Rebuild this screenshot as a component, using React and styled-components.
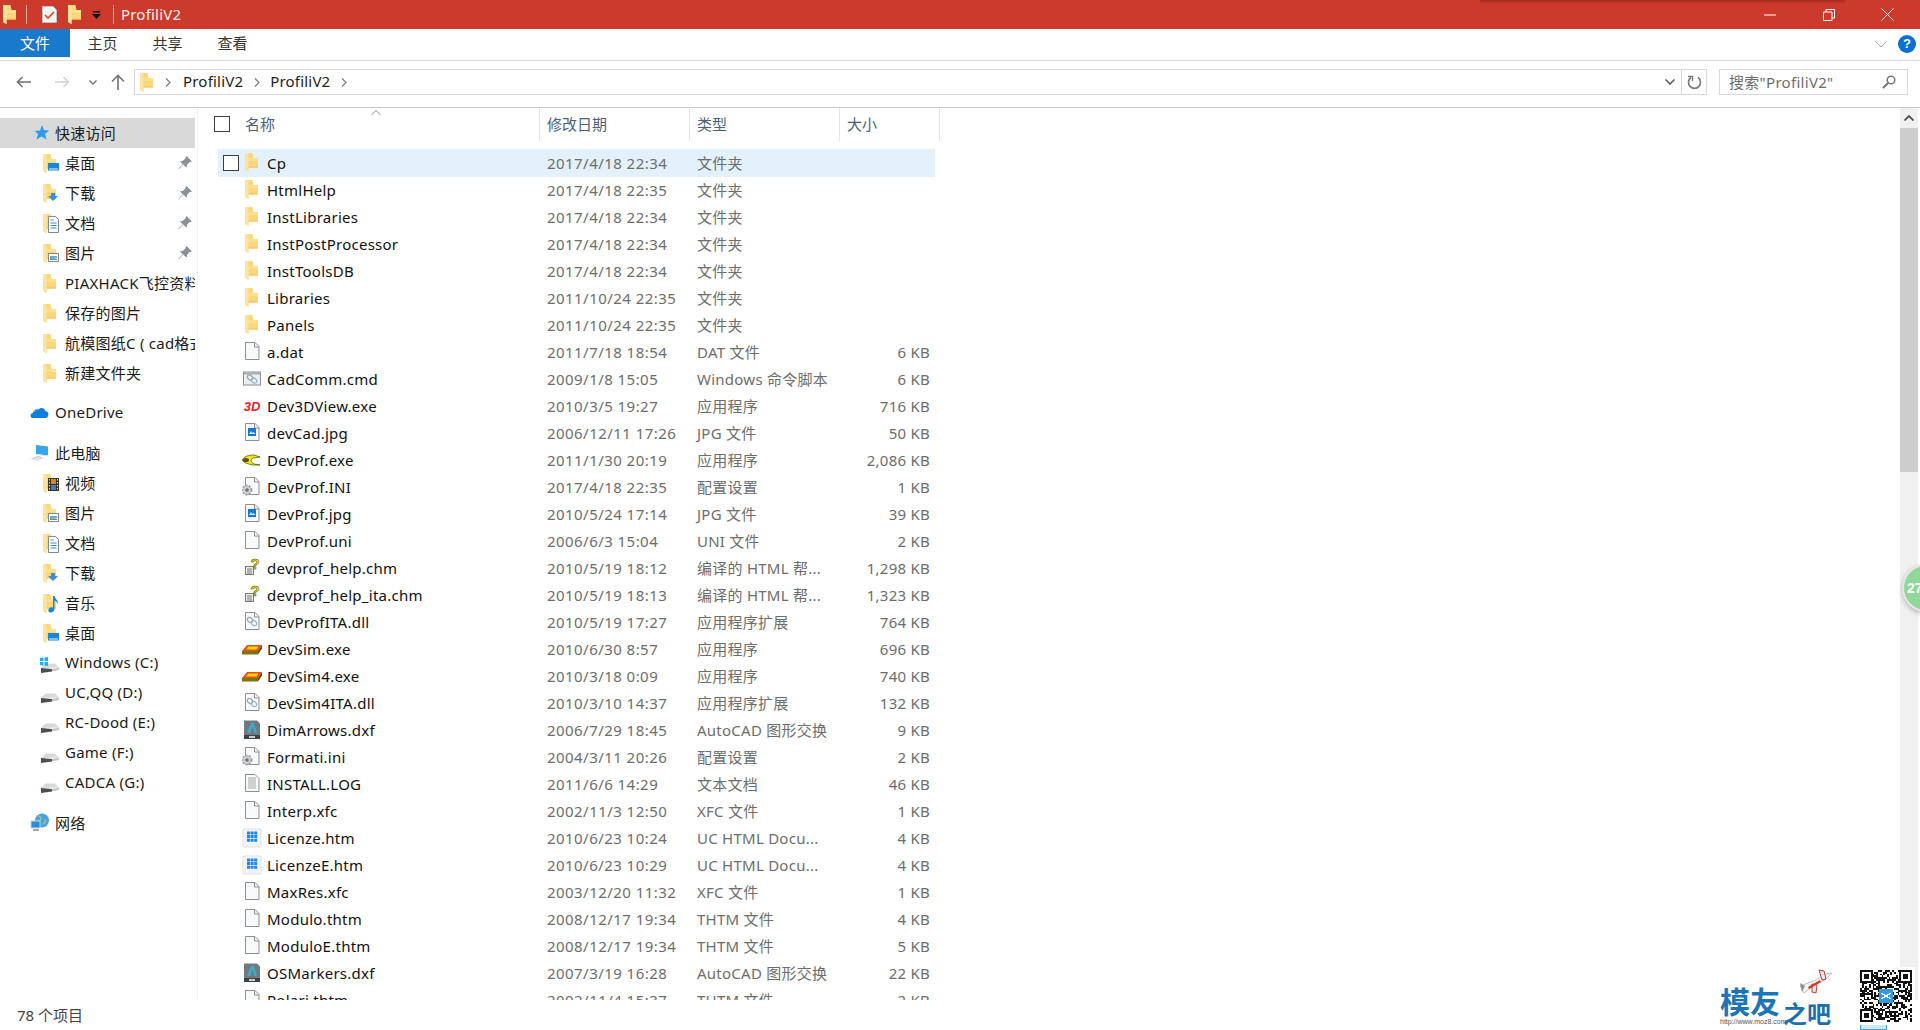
import React from 'react';
import styled, { createGlobalStyle } from 'styled-components';

const GlobalStyle = createGlobalStyle`
  html, body {
    margin: 0;
    padding: 0;
    background: #fff;
    overflow: hidden;
  }
  * {
    box-sizing: border-box;
  }
`;

const FONT = '"Noto Sans", "Noto Sans CJK SC", sans-serif';

/* ---------- data ---------- */

const quickAccess = [
  { label: '桌面', icon: 'desktop', pinned: true },
  { label: '下载', icon: 'download', pinned: true },
  { label: '文档', icon: 'docs', pinned: true },
  { label: '图片', icon: 'pictures', pinned: true },
  { label: 'PIAXHACK飞控资料', icon: 'plain' },
  { label: '保存的图片', icon: 'plain' },
  { label: '航模图纸C ( cad格式', icon: 'plain' },
  { label: '新建文件夹', icon: 'plain' },
];

const thisPc = [
  { label: '视频', icon: 'video' },
  { label: '图片', icon: 'pictures' },
  { label: '文档', icon: 'docs' },
  { label: '下载', icon: 'download' },
  { label: '音乐', icon: 'music' },
  { label: '桌面', icon: 'desktop' },
];

const drives = [
  { label: 'Windows (C:)', win: true },
  { label: 'UC,QQ (D:)' },
  { label: 'RC-Dood (E:)' },
  { label: 'Game (F:)' },
  { label: 'CADCA (G:)' },
];

const files = [
  ['Cp', '2017/4/18 22:34', '文件夹', '', 'folder'],
  ['HtmlHelp', '2017/4/18 22:35', '文件夹', '', 'folder'],
  ['InstLibraries', '2017/4/18 22:34', '文件夹', '', 'folder'],
  ['InstPostProcessor', '2017/4/18 22:34', '文件夹', '', 'folder'],
  ['InstToolsDB', '2017/4/18 22:34', '文件夹', '', 'folder'],
  ['Libraries', '2011/10/24 22:35', '文件夹', '', 'folder'],
  ['Panels', '2011/10/24 22:35', '文件夹', '', 'folder'],
  ['a.dat', '2011/7/18 18:54', 'DAT 文件', '6 KB', 'page'],
  ['CadComm.cmd', '2009/1/8 15:05', 'Windows 命令脚本', '6 KB', 'cmd'],
  ['Dev3DView.exe', '2010/3/5 19:27', '应用程序', '716 KB', 'threeD'],
  ['devCad.jpg', '2006/12/11 17:26', 'JPG 文件', '50 KB', 'jpg'],
  ['DevProf.exe', '2011/1/30 20:19', '应用程序', '2,086 KB', 'prof'],
  ['DevProf.INI', '2017/4/18 22:35', '配置设置', '1 KB', 'ini'],
  ['DevProf.jpg', '2010/5/24 17:14', 'JPG 文件', '39 KB', 'jpg'],
  ['DevProf.uni', '2006/6/3 15:04', 'UNI 文件', '2 KB', 'page'],
  ['devprof_help.chm', '2010/5/19 18:12', '编译的 HTML 帮...', '1,298 KB', 'chm'],
  ['devprof_help_ita.chm', '2010/5/19 18:13', '编译的 HTML 帮...', '1,323 KB', 'chm'],
  ['DevProfITA.dll', '2010/5/19 17:27', '应用程序扩展', '764 KB', 'dll'],
  ['DevSim.exe', '2010/6/30 8:57', '应用程序', '696 KB', 'sim'],
  ['DevSim4.exe', '2010/3/18 0:09', '应用程序', '740 KB', 'sim'],
  ['DevSim4ITA.dll', '2010/3/10 14:37', '应用程序扩展', '132 KB', 'dll'],
  ['DimArrows.dxf', '2006/7/29 18:45', 'AutoCAD 图形交换', '9 KB', 'dxf'],
  ['Formati.ini', '2004/3/11 20:26', '配置设置', '2 KB', 'ini'],
  ['INSTALL.LOG', '2011/6/6 14:29', '文本文档', '46 KB', 'log'],
  ['Interp.xfc', '2002/11/3 12:50', 'XFC 文件', '1 KB', 'page'],
  ['Licenze.htm', '2010/6/23 10:24', 'UC HTML Docu...', '4 KB', 'htm'],
  ['LicenzeE.htm', '2010/6/23 10:29', 'UC HTML Docu...', '4 KB', 'htm'],
  ['MaxRes.xfc', '2003/12/20 11:32', 'XFC 文件', '1 KB', 'page'],
  ['Modulo.thtm', '2008/12/17 19:34', 'THTM 文件', '4 KB', 'page'],
  ['ModuloE.thtm', '2008/12/17 19:34', 'THTM 文件', '5 KB', 'page'],
  ['OSMarkers.dxf', '2007/3/19 16:28', 'AutoCAD 图形交换', '22 KB', 'dxf'],
  ['Polari.thtm', '2002/11/4 15:37', 'THTM 文件', '2 KB', 'page'],
];

/* ---------- drawings ---------- */

const FolderShape = ({ x = 0, y = 0 }) => (
  <g transform={`translate(${x} ${y})`}>
    <path d="M0 0h7.500l1 5H13v9.500H3.500V19L0 17z" fill="#fbd77c" />
    <path d="M3.500 5H13v3H3.500z" fill="#fde08f" />
    <path d="M0 0h3.500v19L0 17z" fill="#fde3a0" />
    <path d="M3.500 13.500H13v1H3.500z" fill="#f0c25a" />
  </g>
);

const PageShape = ({ fill = '#f8f9fa', stroke = '#8d8f92' }) => (
  <path d="M3.500.5h9.500l4 4v13h-13.500z" fill={fill} stroke={stroke} strokeWidth="1" />
);

const FoldShape = () => <path d="M12.500.5v4.500h4.500" fill="none" stroke="#8d8f92" />;

const GearShape = ({ x, y }) => (
  <g transform={`translate(${x} ${y})`}>
    <circle r="4.500" fill="#d2d4d6" stroke="#a4a6a8" strokeDasharray="2 1.200" strokeWidth="2" />
    <circle r="1.800" fill="#6f7274" />
  </g>
);

const LinkShape = ({ dy = 0 }) => (
  <g fill="none" stroke="#9aa5b1" strokeWidth="1.200" transform={`translate(0 ${dy})`}>
    <ellipse cx="8" cy="8" rx="3" ry="2.200" transform="rotate(40 8 8)" />
    <ellipse cx="12" cy="11" rx="3" ry="2.200" transform="rotate(40 12 11)" stroke="#8db6d8" />
  </g>
);

const fileDrawings = {
  folder: <FolderShape x={3} />,
  page: (
    <>
      <PageShape />
      <FoldShape />
    </>
  ),
  cmd: (
    <>
      <rect x="1.500" y="3" width="17" height="13" fill="#eceded" stroke="#8d8f92" />
      <rect x="2" y="3.500" width="16" height="2" fill="#a9abad" />
      <LinkShape dy={0.5} />
    </>
  ),
  threeD: (
    <text x="10" y="15" textAnchor="middle" fontFamily='"Liberation Sans", sans-serif' fontSize="13" fontWeight="700" fontStyle="italic" fill="#ee1c25">
      3D
    </text>
  ),
  jpg: (
    <>
      <PageShape />
      <FoldShape />
      <rect x="6" y="5" width="8" height="8" fill="#1479d4" />
      <path d="M7 11l2-3 1.500 2 1-1 2 2z" fill="#d6ecff" />
    </>
  ),
  prof: (
    <g transform="translate(0 4)">
      <path d="M0 6c3-5 10-5 12-5l6 2-7 1c-1 1-2 2-2 3s2 2 3 3l6 1H11C6 10 2 9 0 6z" fill="#f3e60f" stroke="#5e5a10" strokeWidth=".8" />
      <ellipse cx="4" cy="6" rx="3" ry="2" fill="#57540f" />
    </g>
  ),
  ini: (
    <>
      <PageShape />
      <FoldShape />
      <GearShape x={5} y={13} />
    </>
  ),
  chm: (
    <>
      <rect x="3.500" y="8.500" width="8" height="8" fill="#eceded" stroke="#77797b" />
      <path d="M5 11h5M5 13h5M5 15h5" stroke="#77797b" />
      <text x="13" y="11" textAnchor="middle" fontFamily='"Liberation Sans", sans-serif' fontSize="15" fontWeight="700" fill="#f6ea12" stroke="#3f3f10" strokeWidth=".5">
        ?
      </text>
    </>
  ),
  dll: (
    <>
      <PageShape />
      <FoldShape />
      <LinkShape />
    </>
  ),
  sim: (
    <g transform="translate(0 2)">
      <path d="M0 10l5-6h15l-4 6z" fill="#e94f1b" />
      <path d="M4 8.500l2.500-3h10l-2 3z" fill="#f6d50f" />
      <path d="M0 10h16v3.500H0z" fill="#7d7410" />
      <path d="M16 10l4-6v3.500l-4 6z" fill="#544d0a" />
    </g>
  ),
  dxf: (
    <>
      <path d="M2 .5h13l3 3V19H2z" fill="#6f7a7f" />
      <path d="M5 13L9 3h3l3 10h-2.500l-2-6.500L8 13z" fill="#3fa9c9" />
      <rect x="2" y="15" width="16" height="4" fill="#3c4245" />
      <rect x="7" y="16" width="6" height="2" fill="#c9cdd0" />
    </>
  ),
  log: (
    <>
      <PageShape />
      <path d="M6 4h8M6 6h8M6 8h8M6 10h8M6 12h8M6 14h8" stroke="#9a9c9e" strokeWidth=".9" />
    </>
  ),
  htm: (
    <>
      <rect x="1" y="1" width="18" height="18" rx="1" fill="#f2f4f6" stroke="#dfe1e3" />
      <path d="M5 3.500h3v3H5zM8.600 3.500h3v3h-3zM12.200 3.500h3v3h-3zM5 7.100h3v3H5zM8.600 7.100h3v3h-3zM12.200 7.100h3v3h-3zM5 10.700h3v3H5zM8.600 10.700h3v3h-3zM12.200 10.700h3v3h-3z" fill="#1a86ee" />
    </>
  ),
};

const navOverlays = {
  plain: null,
  desktop: (
    <>
      <rect x="5" y="10" width="11" height="7.500" fill="#1a86d8" />
      <rect x="6" y="15.500" width="9" height="1" fill="#e8f3fb" />
    </>
  ),
  download: <path d="M8 10h4v3h3l-5 5-5-5h3z" fill="#3b8edb" />,
  docs: (
    <>
      <path d="M5.500 3.500h7l3 3v13h-10z" fill="#fff" stroke="#83868a" />
      <path d="M7.500 7h3M7.500 10h6M7.500 12.500h6M7.500 15h6" stroke="#2b8fd8" />
    </>
  ),
  pictures: (
    <>
      <rect x="5.500" y="10.500" width="10" height="8" fill="#fff" stroke="#85888c" />
      <path d="M7 13h7v2l-3 1-4-1z" fill="#6da9d8" />
      <path d="M7 15l3 1h4v1H7z" fill="#6b8f6a" />
    </>
  ),
  video: (
    <>
      <rect x="5" y="5" width="11" height="13" fill="#3a3026" />
      <path d="M6 6h1v1.500H6zM6 9h1v1.500H6zM6 12h1v1.500H6zM6 15h1v1.500H6zM14 6h1v1.500h-1zM14 9h1v1.500h-1zM14 12h1v1.500h-1zM14 15h1v1.500h-1z" fill="#f1d9a0" />
      <rect x="8" y="6" width="5" height="5" fill="#c98a2d" />
      <rect x="8" y="12" width="5" height="5" fill="#3f7fb8" />
    </>
  ),
  music: (
    <path d="M10 3h1.500c.5 3 4 4 3.500 8-1-2-2-3-3.500-3.500V16c0 2-2 3.500-4 3.500S5 18 5.500 16.500 8 14 10 14.500z" fill="#1a86d8" />
  ),
};

const NavFolderIcon = ({ kind }) => (
  <svg width="20" height="20" viewBox="0 0 20 20">
    <FolderShape y={1} />
    {navOverlays[kind]}
  </svg>
);

const StarIcon = () => (
  <svg width="20" height="20" viewBox="0 0 20 20">
    <path d="M1 8h5M2 11h4M3 14h3" stroke="#a9d4f3" />
    <path d="M12 2l2 5 5 .5-4 3.500 1.500 5.500-5-3-5 3 1.500-5.500-3-3 5-.5z" fill="#2f9be8" />
  </svg>
);

const CloudIcon = () => (
  <svg width="20" height="20" viewBox="0 0 20 20">
    <path d="M2 15c-2-1-2-5 1-5 0-3 3-5 6-4 2-2 6-1 6 2 3 0 4 3 3 5-.5 1.500-1.500 2-3 2z" fill="#0f7fd8" />
    <path d="M4 9c1-3 3-3 5-3" fill="none" stroke="#fff" strokeWidth=".8" />
  </svg>
);

const PcIcon = () => (
  <svg width="20" height="20" viewBox="0 0 20 20">
    <path d="M6 2l12 1.500v9L6 11z" fill="#35a6e8" />
    <path d="M6 11l12 1.500v1L6 12z" fill="#dfe6ea" />
    <path d="M0 16l8-3 7 1.500-7 3.500z" fill="#e3e5e6" />
    <path d="M3 15.500l5-2 3 .7" fill="none" stroke="#c6c8ca" />
  </svg>
);

const GlobeIcon = () => (
  <svg width="20" height="20" viewBox="0 0 20 20">
    <circle cx="12" cy="7.500" r="7" fill="#4aa3df" />
    <path d="M8 3c2 0 3 1 3 3s-3 1-4 3M15 6c1 2 0 4-2 5" fill="none" stroke="#8ec5a0" strokeWidth="1.500" />
    <rect x="1" y="8" width="9" height="7" fill="#2b8fd8" stroke="#cfd3d6" />
    <path d="M3 17h6" stroke="#a2a6a9" strokeWidth="2" />
  </svg>
);

const DriveIcon = ({ win }) => (
  <svg width="20" height="20" viewBox="0 0 20 20">
    <path d="M1 15l4.500-4.500H15l4 4z" fill="#d8d9da" />
    <path d="M1 15l11 1v2.500L1 20z" fill="#4c4f52" />
    <path d="M12 16l7-1.500V17l-7 1.500z" fill="#c4c6c7" />
    {win && <path d="M0 5l3.500-.5V8H0zM4.500 4.400L8 4v4H4.500zM0 9h3.500v3.500L0 12zM4.500 9H8v4l-3.500-.5z" fill="#12b4ee" />}
  </svg>
);

const PinIcon = () => (
  <svg width="14" height="14" viewBox="0 0 14 14">
    <path d="M8.500 0L14 5.500l-1.500.5-1 .1-2.600 2.800c.2 1 0 2-.6 2.600L5.200 8.500 1 13l-.5-.5 4.300-4.200L2 5.600c.6-.6 1.600-.8 2.600-.6L7.400 2.400 7.500 1.500z" fill="#8b9198" />
  </svg>
);

const Check = styled.span`
  display: block;
  width: 16px;
  height: 16px;
  border: 1px solid #3d3d3d;
  background: #fff;
`;

const Stroke = ({ w, h, d, color = '#707070', sw = 1.6 }) => (
  <svg width={w} height={h} viewBox={`0 0 ${w} ${h}`}>
    <path d={d} fill="none" stroke={color} strokeWidth={sw} />
  </svg>
);

const Chevron = () => <Stroke w={6} h={9} d="M1 .5l4 4-4 4" color="#808080" sw={1.3} />;

/* watermark pieces */

const qrPath = () => {
  const n = 29;
  let d = '';
  let seed = 77;
  const finder = (r, c) =>
    (r < 7 && c < 7) || (r < 7 && c >= n - 7) || (r >= n - 7 && c < 7);
  for (let r = 0; r < n; r += 1) {
    for (let c = 0; c < n; c += 1) {
      seed = (seed * 1103515245 + 12345) % 2147483648;
      if (!finder(r, c) && seed % 100 < 52) d += `M${c} ${r}h1v1h-1z`;
    }
  }
  [[0, 0], [n - 7, 0], [0, n - 7]].forEach(([x, y]) => {
    d += `M${x} ${y}h7v7h-7zM${x + 1} ${y + 1}v5h5v-5zM${x + 2} ${y + 2}h3v3h-3z`;
  });
  return d;
};

const QrCode = () => (
  <svg width="52" height="52" viewBox="0 0 29 29" shapeRendering="crispEdges">
    <path d={qrPath()} fill="#111" fillRule="evenodd" />
    <rect x="10.500" y="10.500" width="8" height="8" fill="#2f9be0" />
    <path d="M12 13l5 3M12 16l5-3" stroke="#fff" strokeWidth=".9" />
  </svg>
);

const Plane = () => (
  <svg width="36" height="28" viewBox="0 0 36 28">
    <path d="M1 18l4 7 4-3 8-5 10-6 6-6-6 1-10 6z" fill="#f4f4f4" stroke="#9a9a9a" strokeWidth=".6" />
    <path d="M20 2l5 1 2 8-4 1zM13 16l5 1-1 8-4-1z" fill="#e9e9e9" stroke="#c9392c" strokeWidth="1" />
    <path d="M9 19l12-7 1 2-12 7z" fill="#c9392c" />
    <path d="M1 15l5 3-3 6z" fill="#8a8f93" />
  </svg>
);

/* ---------- layout ---------- */

const Window = styled.div`
  position: relative;
  display: flex;
  flex-direction: column;
  width: 1920px;
  height: 1030px;
  overflow: hidden;
  background: #fff;
  font-family: ${FONT};
  font-size: 15px;
  color: #1a1a1a;
`;

const TitleBar = styled.div`
  position: relative;
  display: flex;
  align-items: center;
  flex: 0 0 29px;
  padding-left: 3px;
  background: #cb3a2a;
  color: #fbeeec;
`;

const TitleShade = styled.div`
  position: absolute;
  top: 0;
  left: 1480px;
  width: 365px;
  height: 4px;
  background: linear-gradient(#a52c1f, #cb3a2a);
`;

const TitleSep = styled.span`
  width: 1px;
  height: 19px;
  margin: 0 ${({ $after }) => $after}px 0 ${({ $before }) => $before}px;
  background: #e8a79f;
`;

const QuickIcon = styled.span`
  display: flex;
  margin-right: ${({ $gap }) => $gap}px;
`;

const WindowTitle = styled.span`
  flex: 1;
  margin-left: -1px;
  padding-bottom: 1px;
  line-height: 28px;
  letter-spacing: 0.2px;
`;

const WindowButtons = styled.div`
  display: flex;
  align-items: center;
  height: 29px;
  padding-right: 3px;
`;

const WindowButton = styled.span`
  display: flex;
  align-items: center;
  justify-content: center;
  width: 59px;
`;

const Ribbon = styled.div`
  display: flex;
  align-items: flex-start;
  justify-content: space-between;
  flex: 0 0 32px;
  border-bottom: 1px solid #dadada;
`;

const Tabs = styled.div`
  display: flex;
`;

const Tab = styled.span`
  width: ${({ $active }) => ($active ? 70 : 65)}px;
  height: 28px;
  line-height: 29px;
  text-align: center;
  font-size: 15px;
  background: ${({ $active }) => ($active ? '#1979ca' : 'transparent')};
  color: ${({ $active }) => ($active ? '#fff' : '#333')};
`;

const RibbonRight = styled.div`
  display: flex;
  align-items: center;
  gap: 11px;
  height: 30px;
  padding-right: 4px;
`;

const HelpDot = styled.span`
  width: 18px;
  height: 18px;
  border-radius: 50%;
  background: #0a70d1;
  color: #fff;
  font: 700 13px/18px "Liberation Sans", sans-serif;
  text-align: center;
`;

const AddressRow = styled.div`
  display: flex;
  align-items: center;
  flex: 0 0 47px;
  padding: 0 0 4px 8px;
  border-bottom: 1px solid #c8c8c8;
`;

const NavButton = styled.span`
  display: flex;
  align-items: center;
  justify-content: center;
  width: ${({ $w }) => $w}px;
`;

const AddressBox = styled.div`
  display: flex;
  align-items: center;
  width: 1573px;
  height: 26px;
  padding-left: 5px;
  border: 1px solid #d9d9d9;
`;

const Crumbs = styled.div`
  display: flex;
  align-items: center;
  flex: 1;
`;

const Crumb = styled.span`
  margin: 0 10.5px 2px ${({ $first }) => ($first ? 0 : 10.5)}px;
  line-height: 22px;
  letter-spacing: 0.2px;
  color: #222;
`;

const AddressEnd = styled.span`
  display: flex;
  align-items: center;
  justify-content: center;
  width: 16px;
  margin-right: 3px;
`;

const RefreshSlot = styled.span`
  display: flex;
  align-items: center;
  justify-content: center;
  width: 25px;
  height: 24px;
  border-left: 1px solid #d9d9d9;
`;

const SearchBox = styled.div`
  display: flex;
  align-items: center;
  justify-content: space-between;
  width: 189px;
  height: 26px;
  margin-left: 12px;
  padding: 0 11px 0 9px;
  border: 1px solid #d9d9d9;
  color: #6d6d6d;
`;

const SearchText = styled.span`
  padding-bottom: 2px;
  letter-spacing: 0.3px;
`;

const Main = styled.div`
  display: flex;
  flex: 0 0 892px;
  height: 892px;
  padding-right: 2px;
`;

const Sidebar = styled.nav`
  flex: 0 0 198px;
  padding-top: 10px;
  border-right: 1px solid #f2f2f2;
`;

const NavGroup = styled.div`
  margin-bottom: 10px;
`;

const NavRow = styled.div`
  display: flex;
  align-items: center;
  width: 195px;
  height: 30px;
  overflow: hidden;
  padding-left: ${({ $indent }) => $indent}px;
  background: ${({ $active }) => ($active ? '#d9d9d9' : 'transparent')};
`;

const NavIcon = styled.span`
  display: flex;
  flex: 0 0 20px;
  margin-right: ${({ $gap }) => $gap}px;
`;

const NavLabel = styled.span`
  flex: 1;
  min-width: 0;
  padding-bottom: 2px;
  white-space: nowrap;
  overflow: hidden;
  letter-spacing: 0.25px;
  color: #1a1a1a;
`;

const PinSlot = styled.span`
  display: flex;
  margin-right: 3px;
`;

const FileArea = styled.section`
  flex: 1;
  min-width: 0;
  overflow: hidden;
`;

const HeaderRow = styled.div`
  display: flex;
  align-items: stretch;
  height: 33px;
  margin-bottom: 8px;
  padding-left: 16px;
  color: #4c607a;
`;

const HeaderCheck = styled.span`
  display: flex;
  align-items: center;
  padding-bottom: 1px;
`;

const NameHeader = styled.span`
  position: relative;
  width: 309px;
  padding-left: 15px;
  line-height: 33px;
`;

const SortMark = styled.span`
  position: absolute;
  top: 2px;
  left: 141px;
  display: flex;
`;

const ColumnHeader = styled.span`
  width: ${({ $w }) => $w}px;
  padding-left: 7px;
  line-height: 33px;
  border-left: 1px solid #e5e5e5;
  border-right: ${({ $last }) => ($last ? '1px solid #e5e5e5' : '0')};
`;

const FileRow = styled.div`
  display: grid;
  grid-template-columns: 16px 28px 280px 150px 150px 83px;
  align-items: center;
  width: 717px;
  height: 27px;
  margin-left: 20px;
  padding-left: 5px;
  background: ${({ $selected }) => ($selected ? '#e3f1fd' : 'transparent')};
  box-shadow: ${({ $selected }) => ($selected ? '0 1px 0 #e3f1fd' : 'none')};
`;

const FileIcon = styled.span`
  display: flex;
  justify-content: center;
  grid-column: 2;
  padding-right: 2px;
`;

const FileName = styled.span`
  grid-column: 3;
  white-space: nowrap;
  letter-spacing: 0.25px;
  color: #111;
`;

const FileMeta = styled.span`
  white-space: nowrap;
  letter-spacing: ${({ $spacing }) => $spacing}px;
  color: #6d6d6d;
  text-align: ${({ $right }) => ($right ? 'right' : 'left')};
`;

const ScrollBar = styled.div`
  flex: 0 0 18px;
  background: #f0f0f0;
`;

const ScrollUp = styled.div`
  display: flex;
  align-items: center;
  justify-content: center;
  height: 20px;
`;

const ScrollThumb = styled.div`
  height: 344px;
  background: #cdcdcd;
`;

const StatusBar = styled.footer`
  flex: 0 0 30px;
  padding-left: 17px;
  line-height: 30px;
  font-size: 15px;
  color: #444;
`;

const Bubble = styled.div`
  position: absolute;
  top: 564px;
  left: 1902px;
  width: 48px;
  height: 48px;
  padding-left: 3px;
  border: 2px solid #e6e6e6;
  border-radius: 50%;
  background: #8fd89a;
  box-shadow: 0 2px 5px rgba(0, 0, 0, 0.25);
  color: #fff;
  font: 700 14px/44px "Liberation Sans", sans-serif;
`;

const Watermark = styled.div`
  position: absolute;
  top: 970px;
  left: 1720px;
  width: 120px;
  height: 58px;
`;

const LogoMain = styled.span`
  position: absolute;
  top: 15px;
  left: 0;
  font: 700 30px/30px "Noto Sans CJK SC", sans-serif;
  color: #1d74b4;
  white-space: nowrap;
`;

const LogoSub = styled.span`
  position: absolute;
  top: 29px;
  left: 63px;
  font: 700 24px/28px "Noto Sans CJK SC", sans-serif;
  color: #1a6fae;
  white-space: nowrap;
`;

const LogoUrl = styled.span`
  position: absolute;
  top: 47px;
  left: 0;
  font: 400 7px/10px "Liberation Sans", sans-serif;
  color: #555;
  white-space: nowrap;
`;

const PlaneMark = styled.span`
  position: absolute;
  top: -2px;
  left: 79px;
  display: flex;
`;

const QrFrame = styled.div`
  position: absolute;
  top: 967px;
  left: 1857px;
  display: flex;
  padding: 3px;
  background: #fff;
`;

const QrTab = styled.div`
  position: absolute;
  top: 1025px;
  left: 1860px;
  width: 27px;
  height: 5px;
  border: 1px solid #46a5dc;
  border-top: 0;
  background: #cfe8f5;
`;

/* ---------- page ---------- */

const navFolder = (item, i) => (
  <NavRow key={`${item.label}${i}`} $indent={43}>
    <NavIcon $gap={2}>
      <NavFolderIcon kind={item.icon} />
    </NavIcon>
    <NavLabel>{item.label}</NavLabel>
    {item.pinned && (
      <PinSlot>
        <PinIcon />
      </PinSlot>
    )}
  </NavRow>
);

const App = () => (
  <Window>
    <GlobalStyle />
    <TitleBar>
      <TitleShade />
      <QuickIcon $gap={0}>
        <svg width="13" height="19" viewBox="0 0 13 19">
          <FolderShape />
        </svg>
      </QuickIcon>
      <TitleSep $before={10} $after={15} />
      <QuickIcon $gap={11}>
        <svg width="15" height="17" viewBox="0 0 15 17">
          <path d="M0 0h11l4 4v13H0z" fill="#f4f4f4" stroke="#8f8f8f" />
          <path d="M3 9l3 3 6-6" fill="none" stroke="#e0491d" strokeWidth="1.600" />
        </svg>
      </QuickIcon>
      <QuickIcon $gap={11}>
        <svg width="13" height="19" viewBox="0 0 13 19">
          <FolderShape />
        </svg>
      </QuickIcon>
      <QuickIcon $gap={0}>
        <svg width="9" height="8" viewBox="0 0 9 8">
          <path d="M1 0h7v1.500H1zM0 3h9L4.500 8z" fill="#111" />
        </svg>
      </QuickIcon>
      <TitleSep $before={12} $after={8} />
      <WindowTitle>ProfiliV2</WindowTitle>
      <WindowButtons>
        <WindowButton>
          <svg width="12" height="2" viewBox="0 0 12 2">
            <path d="M0 1h12" stroke="#fff" />
          </svg>
        </WindowButton>
        <WindowButton>
          <svg width="12" height="12" viewBox="0 0 12 12">
            <path d="M.5 3h8.500v8.500H.5zM3 3V.5h8.500v8.500H9" fill="none" stroke="#fff" />
          </svg>
        </WindowButton>
        <WindowButton>
          <svg width="13" height="13" viewBox="0 0 13 13">
            <path d="M.5.5l12 12M12.500.5l-12 12" stroke="#fff" />
          </svg>
        </WindowButton>
      </WindowButtons>
    </TitleBar>

    <Ribbon>
      <Tabs>
        <Tab $active>文件</Tab>
        <Tab>主页</Tab>
        <Tab>共享</Tab>
        <Tab>查看</Tab>
      </Tabs>
      <RibbonRight>
        <Stroke w={12} h={7} d="M.5.5L6 6l5.500-5.500" color="#a8a8a8" sw={1} />
        <HelpDot>?</HelpDot>
      </RibbonRight>
    </Ribbon>

    <AddressRow>
      <NavButton $w={31}>
        <Stroke w={15} h={12} d="M15 6H1.500M6.500 1l-5 5 5 5" sw={1.6} />
      </NavButton>
      <NavButton $w={46}>
        <Stroke w={15} h={12} d="M0 6h13.500M8.500 1l5 5-5 5" color="#d4d4d4" sw={1.6} />
      </NavButton>
      <NavButton $w={16}>
        <Stroke w={8} h={5} d="M.5.500L4 4l3.500-3.500" sw={1.4} />
      </NavButton>
      <NavButton $w={33}>
        <Stroke w={14} h={16} d="M7 16V2M1 7.500L7 1.500l6 6" color="#777" sw={1.7} />
      </NavButton>
      <AddressBox>
        <svg width="13" height="19" viewBox="0 0 13 19">
          <FolderShape />
        </svg>
        <Crumbs>
          <NavButton $w={30}>
            <Chevron />
          </NavButton>
          <Crumb $first>ProfiliV2</Crumb>
          <Chevron />
          <Crumb>ProfiliV2</Crumb>
          <Chevron />
        </Crumbs>
        <AddressEnd>
          <Stroke w={10} h={6} d="M.5.5L5 5l4.500-4.500" color="#555" sw={1.5} />
        </AddressEnd>
        <RefreshSlot>
          <svg width="15" height="15" viewBox="0 0 15 15">
            <path d="M4 2.500a6 6 0 1 0 7 0" fill="none" stroke="#7a7a7a" strokeWidth="1.600" />
            <path d="M1 1.500h4.500V6" fill="none" stroke="#7a7a7a" strokeWidth="1.400" />
          </svg>
        </RefreshSlot>
      </AddressBox>
      <SearchBox>
        <SearchText>搜索"ProfiliV2"</SearchText>
        <svg width="14" height="14" viewBox="0 0 14 14">
          <circle cx="9" cy="5" r="3.800" fill="none" stroke="#777" strokeWidth="1.500" />
          <path d="M6.200 7.800L1 13" stroke="#777" strokeWidth="2" />
        </svg>
      </SearchBox>
    </AddressRow>

    <Main>
      <Sidebar>
        <NavGroup>
          <NavRow $indent={30} $active>
            <NavIcon $gap={5}>
              <StarIcon />
            </NavIcon>
            <NavLabel>快速访问</NavLabel>
          </NavRow>
          {quickAccess.map(navFolder)}
        </NavGroup>
        <NavGroup>
          <NavRow $indent={30}>
            <NavIcon $gap={5}>
              <CloudIcon />
            </NavIcon>
            <NavLabel>OneDrive</NavLabel>
          </NavRow>
        </NavGroup>
        <NavGroup>
          <NavRow $indent={30}>
            <NavIcon $gap={5}>
              <PcIcon />
            </NavIcon>
            <NavLabel>此电脑</NavLabel>
          </NavRow>
          {thisPc.map(navFolder)}
          {drives.map((drive) => (
            <NavRow key={drive.label} $indent={40}>
              <NavIcon $gap={5}>
                <DriveIcon win={drive.win} />
              </NavIcon>
              <NavLabel>{drive.label}</NavLabel>
            </NavRow>
          ))}
        </NavGroup>
        <NavRow $indent={30}>
          <NavIcon $gap={5}>
            <GlobeIcon />
          </NavIcon>
          <NavLabel>网络</NavLabel>
        </NavRow>
      </Sidebar>

      <FileArea>
        <HeaderRow>
          <HeaderCheck>
            <Check />
          </HeaderCheck>
          <NameHeader>
            名称
            <SortMark>
              <Stroke w={10} h={6} d="M.5 5L5 .5 9.500 5" color="#8a8a8a" sw={1} />
            </SortMark>
          </NameHeader>
          <ColumnHeader $w={150}>修改日期</ColumnHeader>
          <ColumnHeader $w={150}>类型</ColumnHeader>
          <ColumnHeader $w={101} $last>
            大小
          </ColumnHeader>
        </HeaderRow>
        {files.map(([name, date, type, size, icon], i) => (
          <FileRow key={name} $selected={i === 0}>
            {i === 0 && <Check />}
            <FileIcon>
              <svg width="20" height="20" viewBox="0 0 20 20">
                {fileDrawings[icon]}
              </svg>
            </FileIcon>
            <FileName>{name}</FileName>
            <FileMeta $spacing={0.45}>{date}</FileMeta>
            <FileMeta $spacing={0.25}>{type}</FileMeta>
            <FileMeta $spacing={0.25} $right>
              {size}
            </FileMeta>
          </FileRow>
        ))}
      </FileArea>

      <ScrollBar>
        <ScrollUp>
          <Stroke w={10} h={6} d="M.5 5.500L5 1l4.500 4.500" color="#505050" sw={1.8} />
        </ScrollUp>
        <ScrollThumb />
      </ScrollBar>
    </Main>

    <StatusBar>78 个项目</StatusBar>

    <Bubble>27</Bubble>
    <Watermark>
      <LogoMain>模友</LogoMain>
      <LogoSub>之吧</LogoSub>
      <LogoUrl>http://www.moz8.com</LogoUrl>
      <PlaneMark>
        <Plane />
      </PlaneMark>
    </Watermark>
    <QrFrame>
      <QrCode />
    </QrFrame>
    <QrTab />
  </Window>
);

export default App;
